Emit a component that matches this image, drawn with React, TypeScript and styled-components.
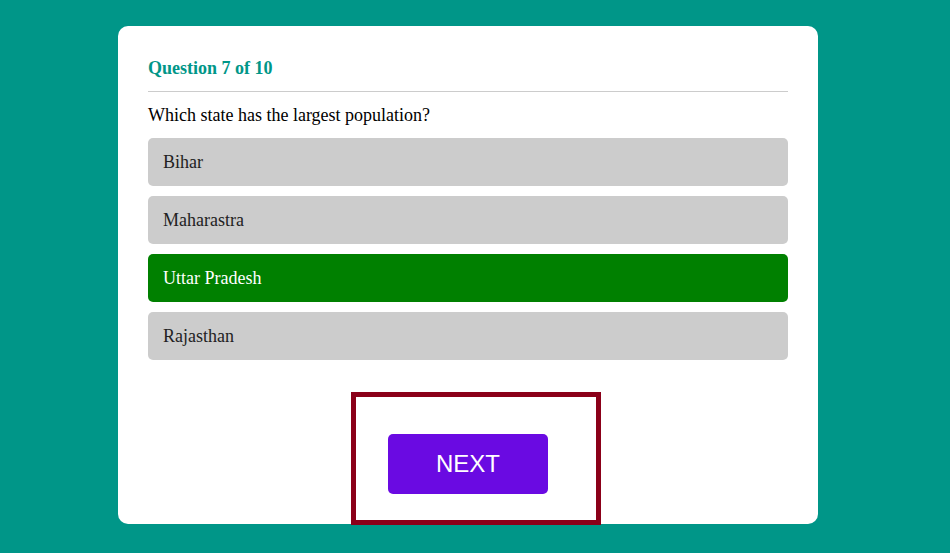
import React from "react";
import styled, { createGlobalStyle } from "styled-components";

const Global = createGlobalStyle`
  html, body { margin: 0; padding: 0; background: #009688; }
  body { font-family: "Liberation Serif", "Times New Roman", serif; }
`;

const Page = styled.div`
  width: 950px;
  height: 553px;
  padding-top: 26px;
  box-sizing: border-box;
  overflow: hidden;
`;

const Card = styled.div`
  position: relative;
  margin-left: 118px;
  width: 700px;
  box-sizing: border-box;
  background: #fff;
  border-radius: 10px;
  padding: 30px 30px 30px;
  display: flex;
  flex-direction: column;
`;

const Title = styled.h3`
  margin: 0;
  font-size: 18px;
  line-height: 24px;
  font-weight: bold;
  color: #009688;
  padding-bottom: 11px;
  border-bottom: 1px solid #ccc;
`;

const Question = styled.p`
  margin: 11px 0 11px;
  font-size: 18px;
  line-height: 24px;
  color: #000;
`;

const Options = styled.div`
  display: flex;
  flex-direction: column;
  gap: 10px;
`;

const Option = styled.div<{ $correct?: boolean }>`
  height: 48px;
  display: flex;
  align-items: center;
  padding-left: 15px;
  border-radius: 5px;
  font-size: 18px;
  background: ${(p) => (p.$correct ? "#008000" : "#cccccc")};
  color: ${(p) => (p.$correct ? "#fff" : "#222")};
`;

const Footer = styled.div`
  display: flex;
  justify-content: center;
  margin-top: 74px;
`;

const NextButton = styled.button`
  width: 160px;
  height: 60px;
  border: none;
  border-radius: 5px;
  background: #6a0ae2;
  color: #fff;
  font-family: "Liberation Sans", Arial, sans-serif;
  font-size: 24px;
  cursor: pointer;
`;

const Highlight = styled.div`
  position: absolute;
  left: 233px;
  top: 366px;
  width: 250px;
  height: 133px;
  box-sizing: border-box;
  border: 5px solid #8b0019;
  pointer-events: none;
`;

const options = ["Bihar", "Maharastra", "Uttar Pradesh", "Rajasthan"];

export default function App() {
  return (
    <Page>
      <Global />
      <Card>
        <Title>Question 7 of 10</Title>
        <Question>Which state has the largest population?</Question>
        <Options>
          {options.map((o) => (
            <Option key={o} $correct={o === "Uttar Pradesh"}>
              {o}
            </Option>
          ))}
        </Options>
        <Footer>
          <NextButton>NEXT</NextButton>
        </Footer>
        <Highlight />
      </Card>
    </Page>
  );
}
